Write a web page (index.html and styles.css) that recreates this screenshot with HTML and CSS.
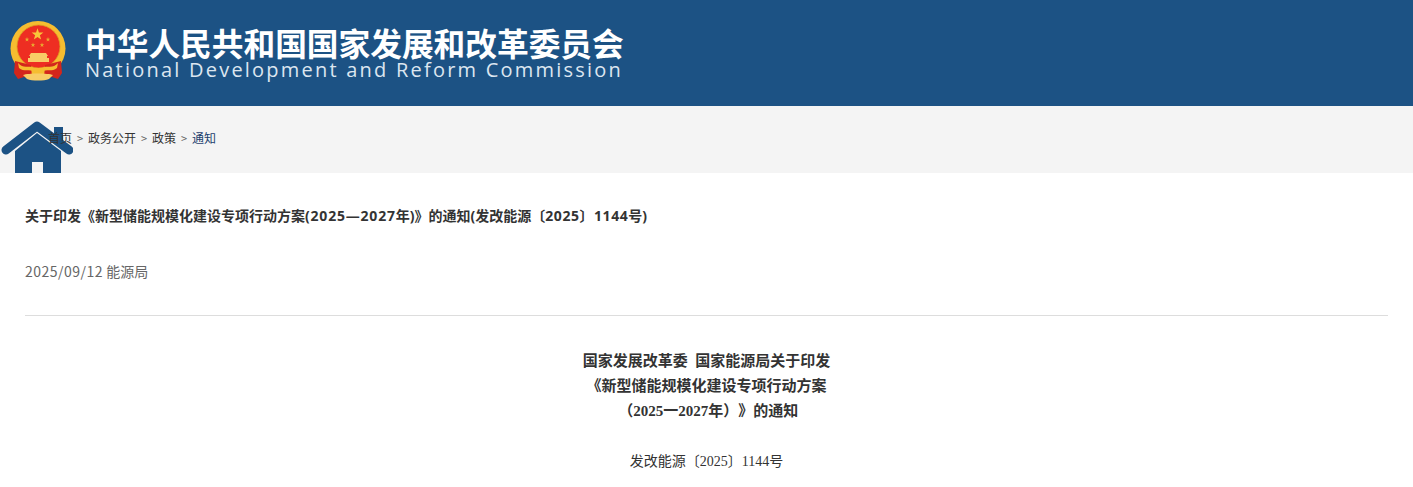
FILE: index.html
```html
<!DOCTYPE html>
<html lang="zh-CN">
<head>
    <meta charset="UTF-8">
    <meta name="viewport" content="width=device-width, initial-scale=1.0">
    <title>关于印发《新型储能规模化建设专项行动方案(2025—2027年)》的通知</title>
    <link rel="stylesheet" href="styles.css">
</head>
<body>
    <header class="header">
        <svg class="emblem" viewBox="0 0 56 60" width="56" height="60">
            <defs>
                <polygon id="star" points="0,-10 2.350,-3.200 9.500,-3.100 3.800,1.200 5.900,8.100 0,4 -5.900,8.100 -3.800,1.200 -9.500,-3.100 -2.350,-3.200"/>
            </defs>
            <circle cx="28" cy="27.500" r="27.500" fill="#f6bd30"/>
            <circle cx="28.500" cy="25.500" r="21.500" fill="#ee2e22" stroke="#dc9d22" stroke-width="0.800"/>
            <use href="#star" transform="translate(27.500 13.500) scale(.62)" fill="#f8c63a"/>
            <use href="#star" transform="translate(17 18.500) scale(.24)" fill="#e9ad30"/>
            <use href="#star" transform="translate(38 18.500) scale(.24)" fill="#e9ad30"/>
            <use href="#star" transform="translate(23 24) scale(.24)" fill="#e9ad30"/>
            <use href="#star" transform="translate(32 24) scale(.24)" fill="#e9ad30"/>
            <path d="M21 32 H36 L38 35 H19 Z M20 35 H37 V37 H39 V41 H18 V37 H20 Z" fill="#f8cd66"/>
            <path d="M5 40 L21 44 L22 57 L14 56 L8 58 L4 52 Z" fill="#d3261c"/>
            <path d="M51 40 L35 44 L34 57 L42 56 L48 58 L52 52 Z" fill="#d3261c"/>
            <path d="M8 42 C13 48 19 44 24 47 H32 C37 44 43 48 48 42 L47 47 C42 51 37 48 33 50 V53 H23 V50 C19 48 14 51 9 47 Z" fill="#f6bd30"/>
            <path d="M13 54 C18 52 38 52 43 54 L39 58 C34 60 22 60 17 58 Z" fill="#f8cd66"/>
        </svg>
        <div class="site-name">
            <div class="site-name-cn">中华人民共和国国家发展和改革委员会</div>
            <div class="site-name-en">National Development and Reform Commission</div>
        </div>
    </header>

    <nav class="crumbs">
        <svg class="home-icon" viewBox="0 0 72 52" width="72" height="52">
            <path d="M14 52 V30 L36 12 L60 30 V52 H42 V41 H31 V52 Z" fill="#1c5284"/>
            <rect x="53" y="6" width="9" height="16" fill="#1c5284"/>
            <path d="M5 29 L36 5 L68 29" fill="none" stroke="#1c5284" stroke-width="9" stroke-linecap="round" stroke-linejoin="round"/>
        </svg>
        <a href="#">首页</a><span class="sep">&gt;</span><a href="#">政务公开</a><span class="sep">&gt;</span><a href="#">政策</a><span class="sep">&gt;</span><a href="#" class="current">通知</a>
    </nav>

    <main class="article">
        <h1 class="article-title">关于印发《新型储能规模化建设专项行动方案<span class="num">(2025—2027</span>年)》的通知(发改能源〔<span class="num-small">2025〕1144</span>号)</h1>
        <div class="article-meta"><span class="article-date">2025/09/12</span> 能源局</div>
        <div class="article-body">
            <p class="doc-title">国家发展改革委&nbsp; 国家能源局关于印发<br>《新型储能规模化建设专项行动方案<br>&nbsp;（2025一2027年）》的通知</p>
            <p class="doc-number">发改能源〔2025〕1144号</p>
        </div>
    </main>
</body>
</html>
```

FILE: styles.css
```css
* {
    margin: 0;
    padding: 0;
    box-sizing: border-box;
}

body {
    font-family: "Noto Sans CJK SC", "Liberation Sans", sans-serif;
    background: #fff;
    color: #333;
    overflow: hidden;
    text-spacing-trim: space-all;
}

.header {
    height: 106px;
    background: #1c5284;
    display: flex;
    align-items: center;
    padding: 0 0 4px 10px;
    gap: 19px;
}

.emblem {
    flex: none;
    filter: blur(.3px);
}

.site-name {
    color: #fff;
    padding-top: 6px;
}

.site-name-cn {
    font-size: 31.700px;
    font-weight: 700;
    line-height: 32px;
    white-space: nowrap;
}

.site-name-en {
    font-family: "Open Sans", sans-serif;
    font-size: 20px;
    line-height: 24px;
    letter-spacing: 2.220px;
    color: #dce6f0;
    white-space: nowrap;
}

.crumbs {
    position: relative;
    isolation: isolate;
    height: 67px;
    background: #f4f4f4;
    padding-left: 48px;
    font-size: 12px;
    line-height: 63px;
    color: #333;
}

.crumbs a {
    color: #333;
    text-decoration: none;
}

.crumbs a.current {
    color: #1c3f6e;
}

.sep {
    display: inline-block;
    width: 16px;
    text-align: center;
    color: #666;
    font-size: 11px;
}

.home-icon {
    position: absolute;
    left: 1px;
    top: 15px;
    z-index: -1;
    filter: blur(.6px);
}

.article {
    padding: 0 25px;
}

.article-title {
    font-family: "Open Sans", "Noto Sans CJK SC", sans-serif;
    font-size: 14px;
    font-weight: 700;
    line-height: 20px;
    padding-top: 33px;
    color: #333;
}

.num {
    letter-spacing: .8px;
}

.num-small {
    letter-spacing: .55px;
}

.article-meta {
    font-size: 14px;
    line-height: 20px;
    margin-top: 35px;
    padding-bottom: 34px;
    color: #666;
    border-bottom: 1px solid #ddd;
}

.article-date {
    letter-spacing: .5px;
}

.article-body {
    text-align: center;
    font-family: "Liberation Serif", "Noto Sans CJK SC", serif;
    color: #333;
}

.doc-title {
    font-size: 15px;
    font-weight: 700;
    line-height: 25px;
    padding-top: 33px;
}

.doc-number {
    font-size: 14px;
    line-height: 26px;
    margin-top: 25px;
}
```
